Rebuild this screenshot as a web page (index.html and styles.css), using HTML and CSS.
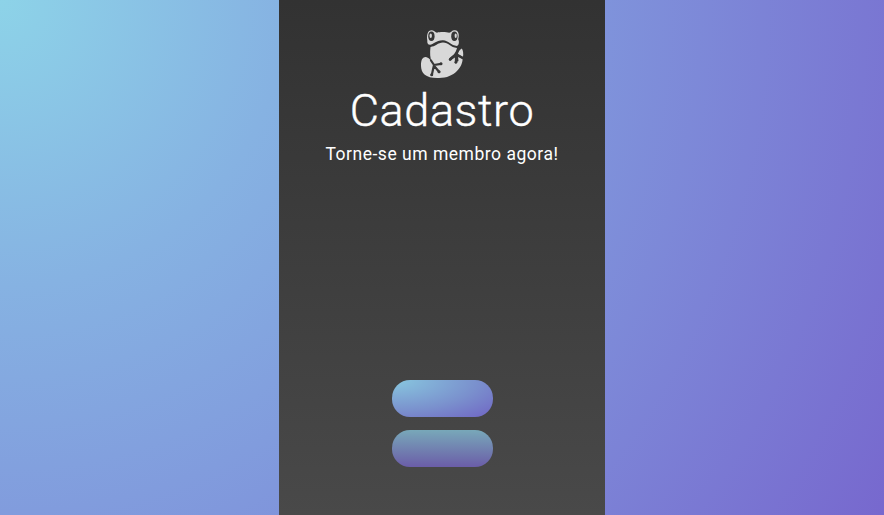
FILE: index.html
```
<!DOCTYPE html>
<html lang="pt-BR">
<head>
<meta charset="utf-8">
<title>Cadastro</title>
<link rel="stylesheet" href="styles.css">
</head>
<body>
<main class="panel">
  <svg class="logo" viewBox="0 0 60 62" aria-hidden="true">
    <g fill="#d8d8d8">
      <path d="M15.3 18.5C14.5 13 15.5 8 20 8.2C22.4 8.3 23.3 10.5 25 10.7C27.5 9.9 34.5 9.9 37.2 10.8C39.4 10.5 39.8 8 43 8.3C47 8.7 47.4 13.5 46.2 17.3C47.5 20 47 23.3 45 24C39 23.6 36.5 18.4 31 18.3C24 18.1 21 23 18 22.8C15.7 22.8 15.1 21 15.3 18.5Z"/>
      <path d="M18.5 24.9C23 25 25.8 20.6 31 20.6C36.5 20.6 38.5 25.6 45 26.1C44.3 29 43 31 42 32.3L37.5 36L39 38L43 35L45 40L46.5 39L46 34L50.6 37C50.5 44.5 43 56 27 56C14 56.5 9.2 51.5 9 44C8.7 37 11.5 34.5 14.5 35.2C17.3 36 18.5 38 19.8 39.5C18 36 17.8 31 18.5 24.9Z"/>
      <path d="M49.8 26.5C46.8 28.5 45.3 30.8 46.2 32L51 34.7C51.6 31.5 51 28.3 49.8 26.5Z"/>
    </g>
    <g fill="#363636"><ellipse cx="19.4" cy="14.2" rx="3.2" ry="4.7"/><ellipse cx="42.4" cy="14.2" rx="3.2" ry="4.7"/></g>
    <g fill="#d8d8d8"><ellipse cx="18.7" cy="13.8" rx="1.2" ry="2.3"/><ellipse cx="43.7" cy="13.8" rx="1.1" ry="2.3"/></g>
    <g class="feet">
      <path d="M19 38.5L22 43L29 41.8M22 43L19.8 53M22.2 44L27.2 50"/>
      <path d="M46.5 27.5L44 33L38 37.5M44 33L43.9 40.3M44.5 33L50.5 36"/>
    </g>
    <g fill="#363636"><circle cx="29" cy="41.8" r="1.5"/><circle cx="19.7" cy="52.7" r="1.5"/><circle cx="27" cy="49.7" r="1.5"/><circle cx="38.3" cy="37.3" r="1.4"/><circle cx="43.9" cy="40.3" r="1.4"/></g>
  </svg>
  <h1 class="title">Cadastro</h1>
  <p class="subtitle">Torne-se um membro agora!</p>
  <div class="actions">
    <button class="button button-primary" type="button" aria-label="Cadastrar"></button>
    <button class="button button-secondary" type="button" aria-label="Voltar"></button>
  </div>
</main>
</body>
</html>
```
FILE: styles.css
```
* { box-sizing: border-box; }
body {
  margin: 0;
  height: 100vh;
  display: flex;
  justify-content: center;
  overflow: hidden;
  background: radial-gradient(circle farthest-corner at 0 0, #8dd3e8 0%, #86b2e2 28%, #7f93db 59%, #7768ce 100%);
  font-family: Roboto, "Noto Sans", sans-serif;
  color: #fff;
}
.panel {
  width: 326px;
  height: 100%;
  padding: 22px 0 48px;
  display: flex;
  flex-direction: column;
  align-items: center;
  background: linear-gradient(#323232, #494949);
}
.logo { width: 60px; height: 62px; flex: none; }
.feet { fill: none; stroke: #363636; stroke-width: 2.2; stroke-linecap: round; stroke-linejoin: round; }
.title {
  margin: 0;
  font-size: 45px;
  line-height: 54px;
  font-weight: 300;
  letter-spacing: 0.6px;
  -webkit-text-stroke: 0.4px #fff;
}
.subtitle {
  margin: 4px 0 0;
  font-size: 17.5px;
  line-height: 24px;
  letter-spacing: 0.52px;
}
.actions {
  margin-top: auto;
  display: flex;
  flex-direction: column;
  gap: 13px;
}
.button {
  width: 101px;
  height: 37px;
  padding: 0;
  border: 0;
  border-radius: 18px;
}
.button-primary { background: radial-gradient(ellipse farthest-corner at 0 0, #88c8df, #7a90cd 60%, #7065c4); }
.button-secondary { background: linear-gradient(#78a8b9, #6b5da8); }
```
